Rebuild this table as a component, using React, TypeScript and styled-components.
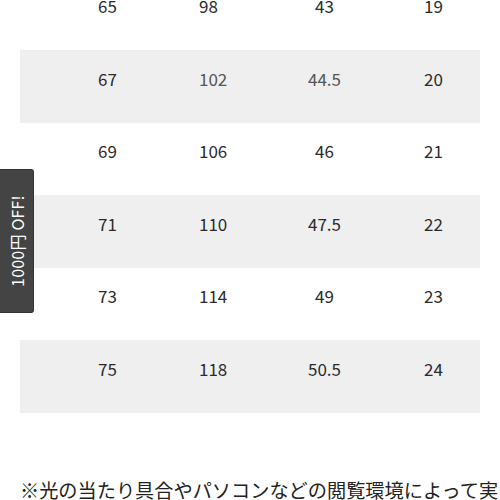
import styled, { createGlobalStyle } from "styled-components";

const GlobalStyle = createGlobalStyle`
    html, body {
        margin: 0;
        padding: 0;
        background: #ffffff;
        overflow: hidden;
    }
    body {
        font-family: "Noto Sans CJK JP", "Noto Sans", sans-serif;
        color: #333333;
    }
`;

const Page = styled.div`
    width: 500px;
    height: 500px;
    overflow: hidden;
    position: relative;
`;

const Table = styled.div`
    margin: -22.5px 20px 0 20px;
    display: flex;
    flex-direction: column;
`;

const Row = styled.div<{ $shade: boolean }>`
    height: 72.5px;
    box-sizing: border-box;
    padding: 0 0 16px 34px;
    display: grid;
    grid-template-columns: 107px 109px 109px 109px;
    justify-items: center;
    align-items: center;
    background: ${(props) => (props.$shade ? "#efefef" : "transparent")};
`;

// the second column reads left-aligned in the original table
const Cell = styled.span<{ $muted?: boolean; $start?: boolean }>`
    font-size: 17px;
    line-height: 1;
    color: ${(props) => (props.$muted ? "#555555" : "#2b2b2b")};
    justify-self: ${(props) => (props.$start ? "start" : "center")};
    padding-left: ${(props) => (props.$start ? "38px" : "0")};
`;

const Note = styled.p`
    margin: 63px 0 0 20px;
    font-size: 19.2px;
    line-height: 29px;
    color: #222222;
    white-space: nowrap;
`;

const Badge = styled.div`
    position: absolute;
    left: 0;
    top: 169px;
    width: 34px;
    height: 144px;
    background: #444444;
    border: 1px solid #333333;
    border-left: none;
    border-radius: 0 3px 3px 0;
    box-sizing: border-box;
    display: flex;
    align-items: center;
    justify-content: center;
`;

const BadgeText = styled.span`
    transform: rotate(-90deg);
    white-space: nowrap;
    color: #ffffff;
    font-size: 16px;
    letter-spacing: 0.2px;
`;

const rows = [
    ["65", "98", "43", "19"],
    ["67", "102", "44.5", "20"],
    ["69", "106", "46", "21"],
    ["71", "110", "47.5", "22"],
    ["73", "114", "49", "23"],
    ["75", "118", "50.5", "24"],
];

function App() {
    return (
        <Page>
            <GlobalStyle />
            <Table>
                {rows.map((row, i) => (
                    <Row key={i} $shade={i % 2 === 1}>
                        {row.map((v, j) => (
                            <Cell
                                key={j}
                                $start={j === 1}
                                $muted={i === 1 && (j === 1 || j === 2)}
                            >
                                {v}
                            </Cell>
                        ))}
                    </Row>
                ))}
            </Table>
            <Note>※光の当たり具合やパソコンなどの閲覧環境によって実</Note>
            <Badge>
                <BadgeText>1000円 OFF!</BadgeText>
            </Badge>
        </Page>
    );
}

export default App;
